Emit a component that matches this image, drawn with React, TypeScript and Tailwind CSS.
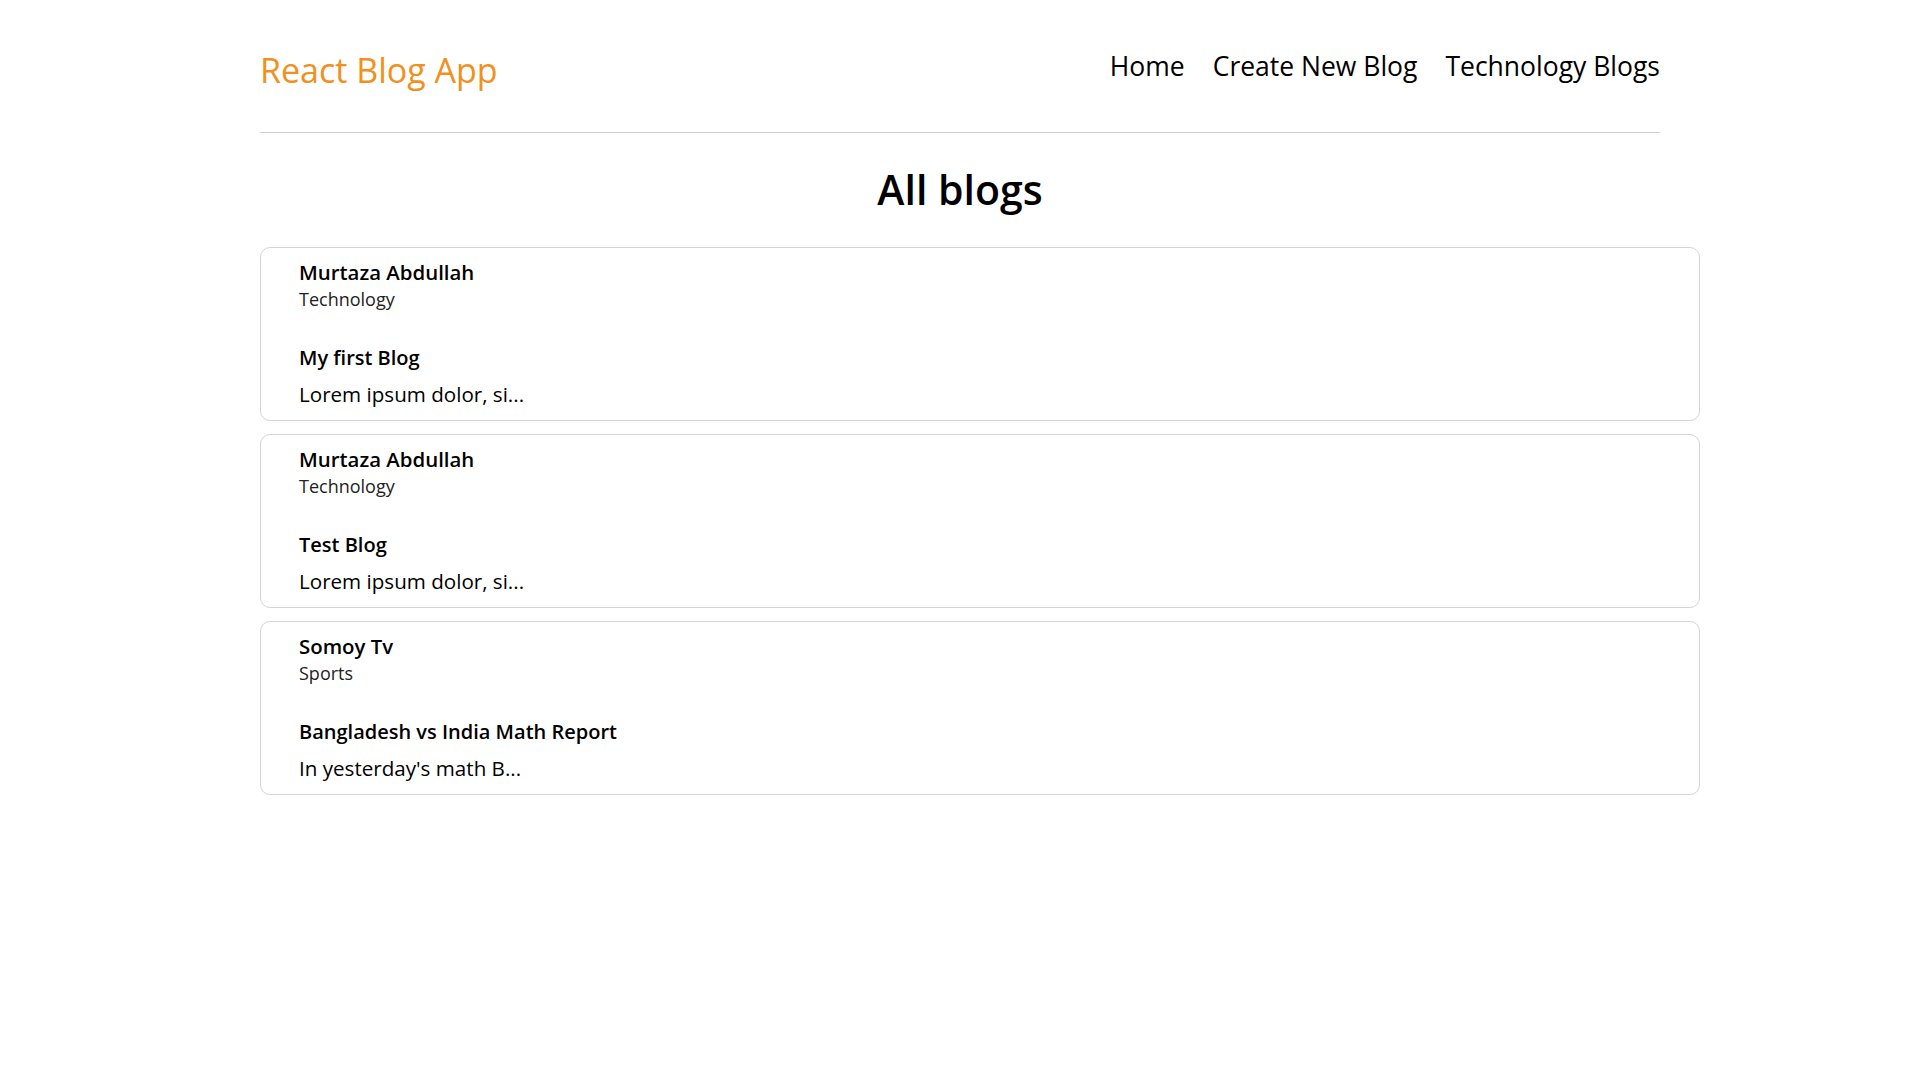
const blogs = [
  {
    id: 1,
    author: 'Murtaza Abdullah',
    category: 'Technology',
    title: 'My first Blog',
    excerpt: 'Lorem ipsum dolor, si...',
  },
  {
    id: 2,
    author: 'Murtaza Abdullah',
    category: 'Technology',
    title: 'Test Blog',
    excerpt: 'Lorem ipsum dolor, si...',
  },
  {
    id: 3,
    author: 'Somoy Tv',
    category: 'Sports',
    title: 'Bangladesh vs India Math Report',
    excerpt: "In yesterday's math B...",
  },
];

function Navbar() {
  return (
    <div>
      <div className="flex items-start justify-between pt-[47px]">
        <a className="mt-[1px] text-[34px] leading-[45px] text-[#f1901c]">React Blog App</a>
        <nav className="mt-[2px] flex gap-[28px] text-[26.5px] leading-[35px] text-black">
          <a>Home</a>
          <a>Create New Blog</a>
          <a>Technology Blogs</a>
        </nav>
      </div>
      <div className="mt-[39px] h-px bg-[#cfcfcf]"></div>
    </div>
  );
}

function BlogCard({ blog }: { blog: (typeof blogs)[number] }) {
  return (
    <div className="w-[1440px] rounded-[10px] border border-[#d4d4d4] pt-[10px] pb-[12px] pl-[38px]">
      <p className="text-[20.4px] font-semibold leading-[28px] text-black">{blog.author}</p>
      <p className="text-[18px] leading-[26px] text-[#222]">{blog.category}</p>
      <h3 className="mt-[32px] text-[20px] font-semibold leading-[28px] text-black">{blog.title}</h3>
      <p className="mt-[8px] text-[20.6px] leading-[28px] text-black">{blog.excerpt}</p>
    </div>
  );
}

export default function App() {
  return (
    <div className="min-h-screen bg-white font-['Open_Sans',sans-serif]">
      <div className="mx-auto w-[1400px]">
        <Navbar />
        <h2 className="mt-[29px] text-center text-[41px] font-semibold leading-[54px] text-black">All blogs</h2>
        <div className="mt-[31px] flex flex-col gap-[13px]">
          {blogs.map((blog) => (
            <BlogCard key={blog.id} blog={blog} />
          ))}
        </div>
      </div>
    </div>
  );
}
